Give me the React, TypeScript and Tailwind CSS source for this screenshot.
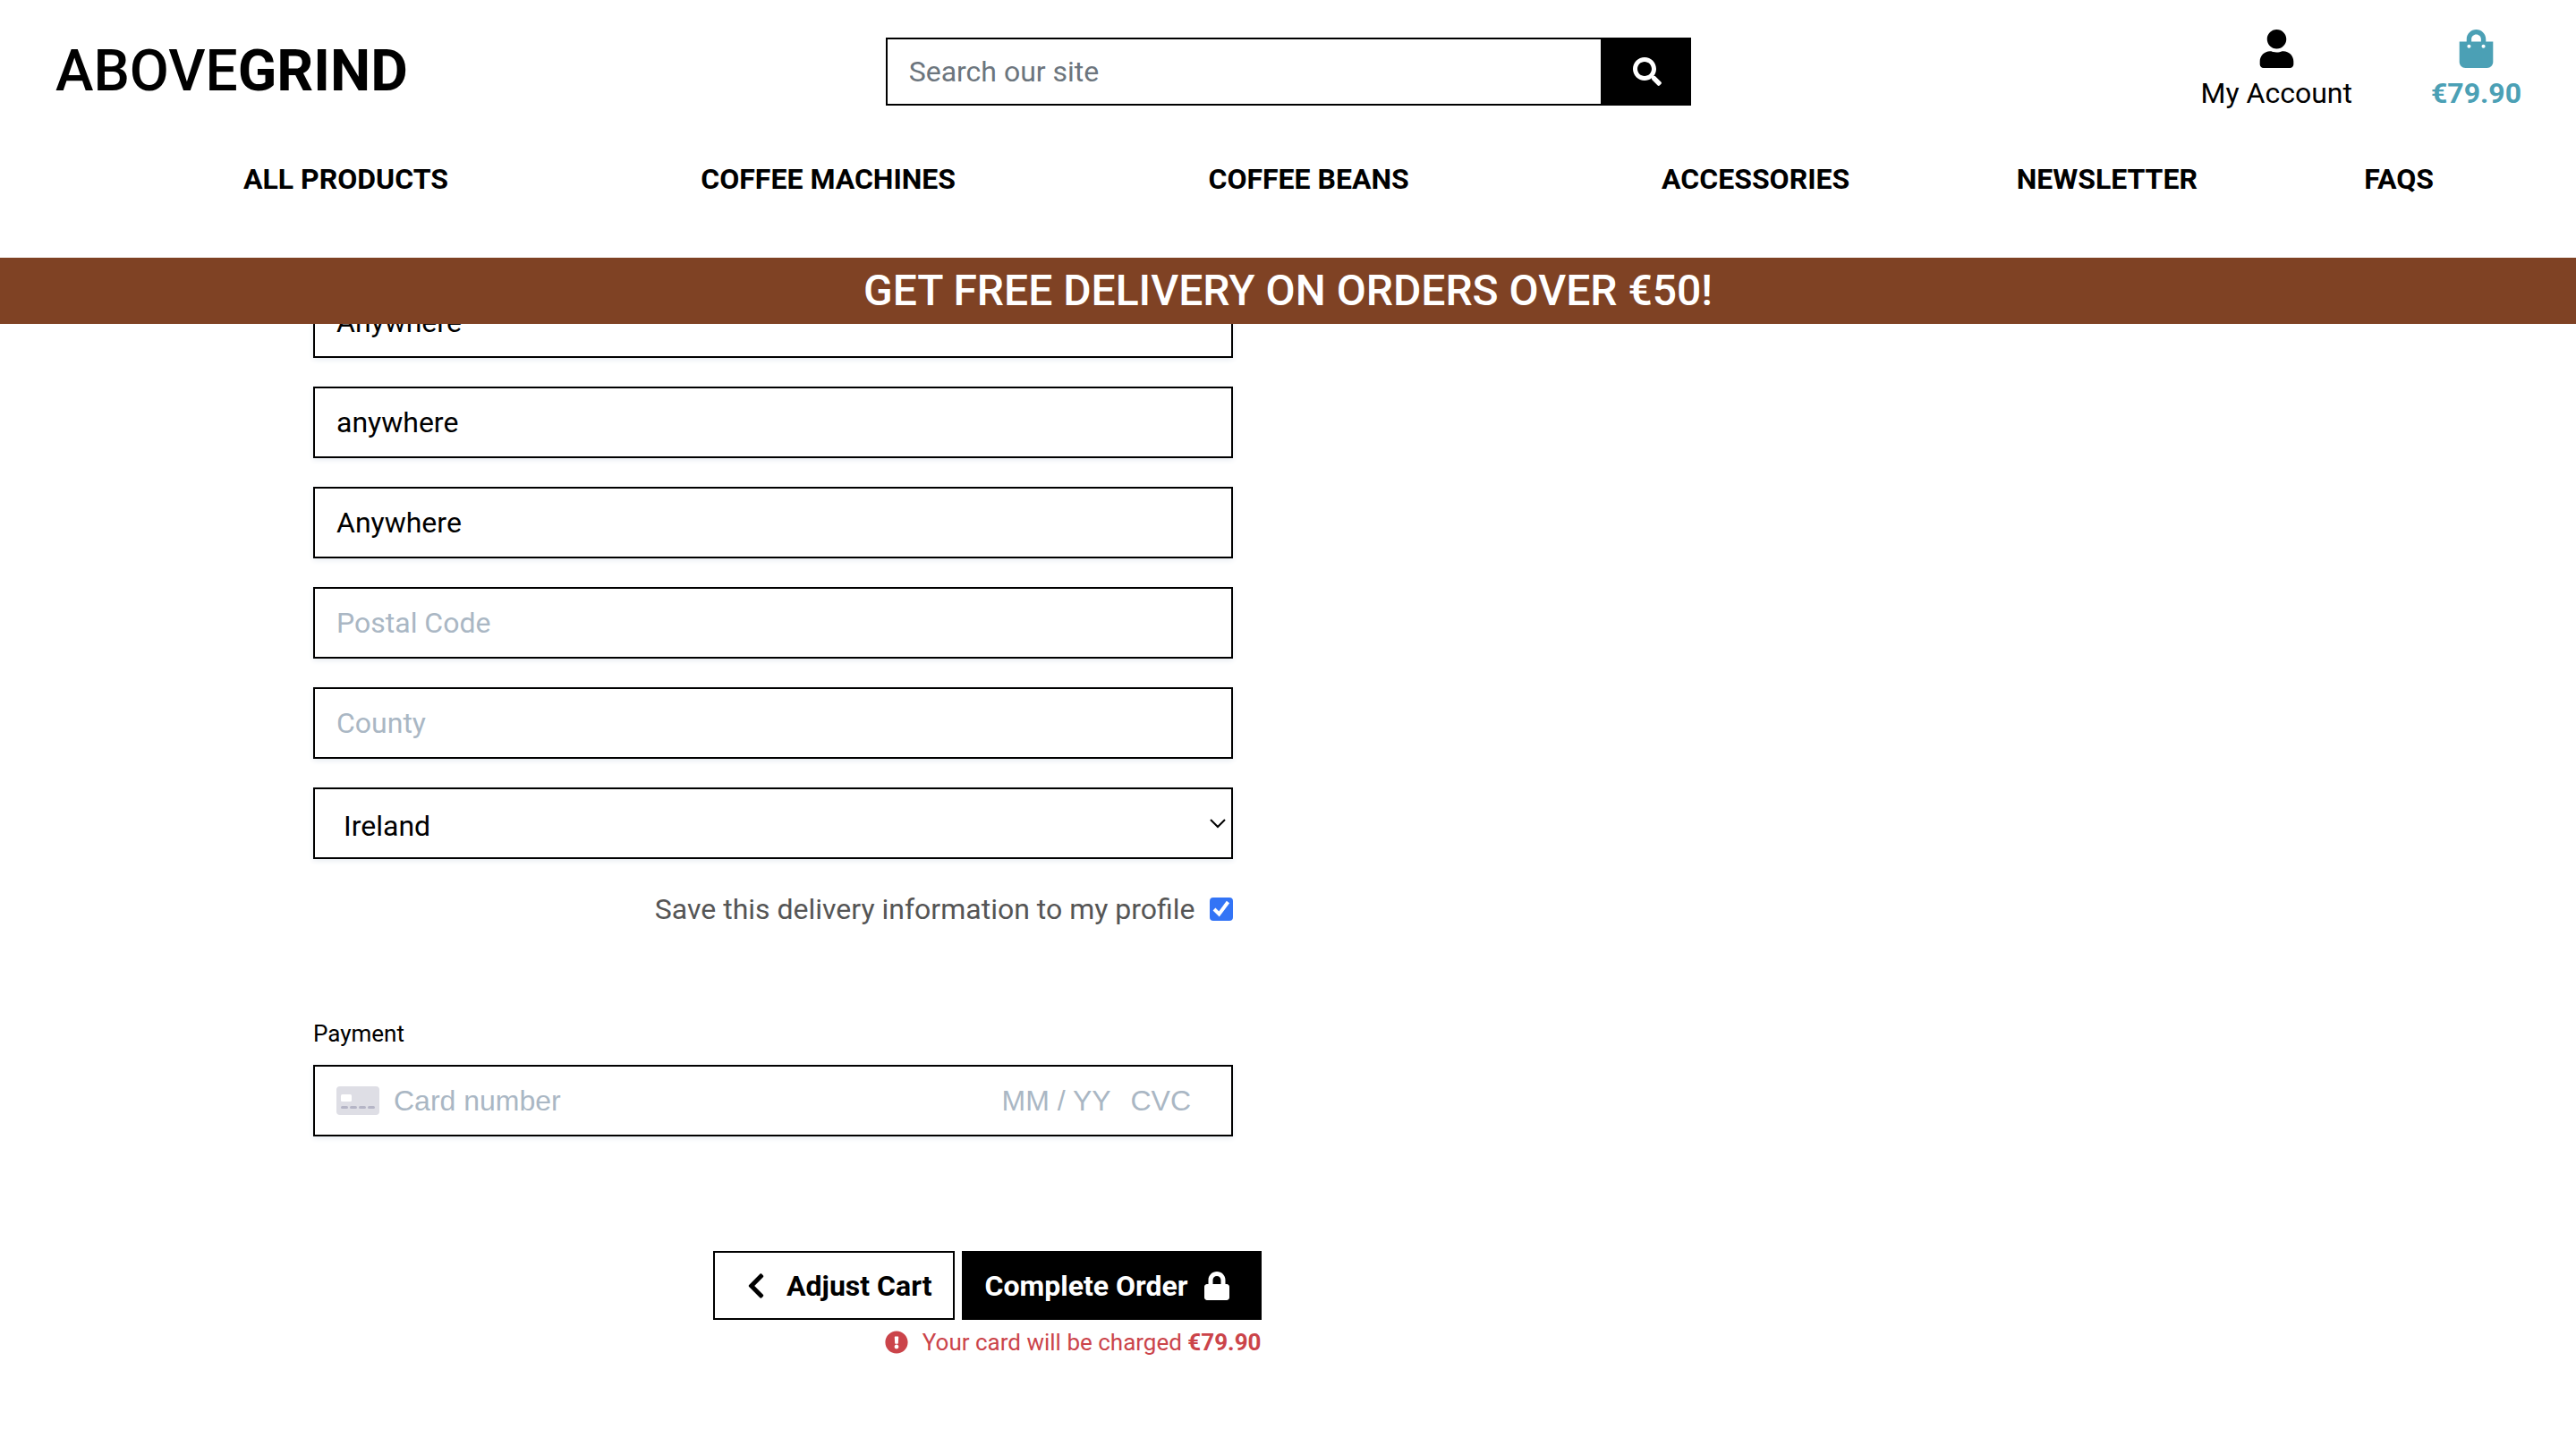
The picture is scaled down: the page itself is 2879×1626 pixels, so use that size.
import React from 'react';
import {
  FaChevronLeft,
  FaExclamationCircle,
  FaLock,
  FaSearch,
  FaShoppingBag,
  FaUser,
} from 'react-icons/fa';

const productLinks = ['All Products', 'Coffee Machines', 'Coffee Beans', 'Accessories'];
const infoLinks = ['Newsletter', 'FAQs'];

const addressFields = [
  { id: 'street1', label: 'Street Address 1', value: 'Anywhere' },
  { id: 'street2', label: 'Street Address 2', value: 'anywhere' },
  { id: 'town', label: 'Town or City', value: 'Anywhere' },
  { id: 'postcode', label: 'Postal Code', value: '' },
  { id: 'county', label: 'County', value: '' },
];

const countries = ['Ireland', 'France', 'Germany', 'United Kingdom'];

function Header() {
  return (
    <header className="sticky top-0 z-10 bg-white">
      <div className="grid h-40 grid-cols-3 items-center">
        <a href="#home" className="pl-[62px] text-[64px] leading-[76px] font-medium">
          ABOVE<strong className="font-bold">GRIND</strong>
        </a>
        <form className="flex h-[76px] pr-[29px] pl-[30px]" role="search">
          <input
            type="search"
            aria-label="Search our site"
            placeholder="Search our site"
            className="min-w-0 flex-1 border-2 border-black px-6 outline-none placeholder:text-[#6c757d]"
          />
          <button
            type="button"
            aria-label="Search"
            className="flex w-[99px] items-center justify-center bg-black text-white"
          >
            <FaSearch className="size-8" />
          </button>
        </form>
        <div className="flex justify-end gap-[88px] pr-[61px]">
          <a href="#account" className="flex flex-col items-center gap-1">
            <FaUser className="size-[43px]" />
            My Account
          </a>
          <a href="#bag" className="flex flex-col items-center gap-1 font-bold text-[#4ba0b5]">
            <FaShoppingBag className="size-[43px]" />
            €79.90
          </a>
        </div>
      </div>
      <nav className="flex justify-between pt-4 pr-[159px] pb-16 pl-44 font-bold uppercase">
        {productLinks.map((name) => (
          <a key={name} href="#products" className="pl-24">
            {name}
          </a>
        ))}
        {infoLinks.map((name) => (
          <a key={name} href="#info">
            {name}
          </a>
        ))}
      </nav>
      <p className="bg-[#7f4224] text-center text-[48px] leading-[74px] font-medium text-white">
        GET FREE DELIVERY ON ORDERS OVER €50!
      </p>
    </header>
  );
}

function CardIcon() {
  return (
    <svg viewBox="0 0 48 32" className="h-8 w-12 shrink-0" aria-hidden="true">
      <rect width="48" height="32" rx="4" fill="#dedee5" />
      <rect x="5" y="9" width="12" height="8" rx="1.5" fill="#fff" />
      {[5, 15, 25, 35].map((x) => (
        <rect key={x} x={x} y="22" width="8" height="3" rx="1.5" fill="#b5b5c6" />
      ))}
    </svg>
  );
}

function CheckoutForm() {
  return (
    <form className="px-[30px]">
      <div className="flex flex-col gap-8 pr-8">
        {addressFields.map((field) => (
          <input
            key={field.id}
            id={field.id}
            type="text"
            aria-label={field.label}
            placeholder={field.label}
            defaultValue={field.value}
            className="h-20 w-full border-2 border-black bg-white px-6 shadow-[0_2px_6px_#e6ebf1] outline-none placeholder:text-[#aab7c4]"
          />
        ))}
        <div className="relative">
          <select
            aria-label="Country"
            defaultValue="Ireland"
            className="h-20 w-full appearance-none border-2 border-black bg-white px-8 pt-1.5 shadow-[0_2px_6px_#e6ebf1] outline-none"
          >
            {countries.map((country) => (
              <option key={country}>{country}</option>
            ))}
          </select>
          <svg
            viewBox="0 0 18 11"
            className="pointer-events-none absolute top-[35px] right-2 h-[11px] w-[18px]"
            fill="none"
            stroke="black"
            strokeWidth="2"
            aria-hidden="true"
          >
            <path d="M1 1l8 8 8-8" />
          </svg>
        </div>
        <div className="flex items-center justify-end gap-4">
          <label htmlFor="save-info" className="text-[#555]">
            Save this delivery information to my profile
          </label>
          <span className="relative flex">
            <input
              id="save-info"
              type="checkbox"
              defaultChecked
              className="peer size-[26px] appearance-none rounded border-2 border-gray-400 bg-white checked:border-[#3374f6] checked:bg-[#3374f6]"
            />
            <svg
              viewBox="0 0 26 26"
              className="pointer-events-none absolute inset-0 hidden size-[26px] peer-checked:block"
              fill="none"
              stroke="white"
              strokeWidth="4"
              aria-hidden="true"
            >
              <path d="M5 13l5.500 5.500L20.500 5" />
            </svg>
          </span>
        </div>
      </div>

      <fieldset className="mt-24 pr-8">
        <legend className="text-[26px] leading-[38px]">Payment</legend>
        <div className="mt-4 flex h-20 items-center border-2 border-black bg-white px-6 font-['Liberation_Sans',Arial,sans-serif] shadow-[0_2px_6px_#e6ebf1]">
          <CardIcon />
          <input
            type="text"
            aria-label="Card number"
            placeholder="Card number"
            className="ml-4 min-w-0 flex-1 outline-none placeholder:text-[#aab7c4]"
          />
          <input
            type="text"
            aria-label="Expiry date"
            placeholder="MM / YY"
            className="w-36 outline-none placeholder:text-[#aab7c4]"
          />
          <input
            type="text"
            aria-label="CVC"
            placeholder="CVC"
            className="w-[88px] outline-none placeholder:text-[#aab7c4]"
          />
        </div>
      </fieldset>

      <div className="mt-32 flex justify-end gap-2 font-bold">
        <a
          href="#cart"
          className="flex h-[77px] items-center gap-6 border-2 border-black pr-6 pl-9"
        >
          <FaChevronLeft className="h-8 w-5" />
          Adjust Cart
        </a>
        <button
          type="button"
          className="flex h-[77px] items-center gap-[18px] bg-black pr-9 pl-[25px] text-white"
        >
          Complete Order
          <FaLock className="h-8 w-7" />
        </button>
      </div>
      <p className="mt-1.5 flex items-center justify-end gap-4 text-[26px] leading-[38px] text-[#cb444a]">
        <FaExclamationCircle className="size-[26px]" />
        <span>
          Your card will be charged <strong className="font-bold">€79.90</strong>
        </span>
      </p>
    </form>
  );
}

export default function App() {
  return (
    <div className="min-h-screen bg-white font-[Roboto,sans-serif] text-[32px] leading-[48px] text-black">
      <Header />
      <main className="mx-auto -mt-[42px] grid max-w-[2239px] grid-cols-2">
        <CheckoutForm />
      </main>
    </div>
  );
}
